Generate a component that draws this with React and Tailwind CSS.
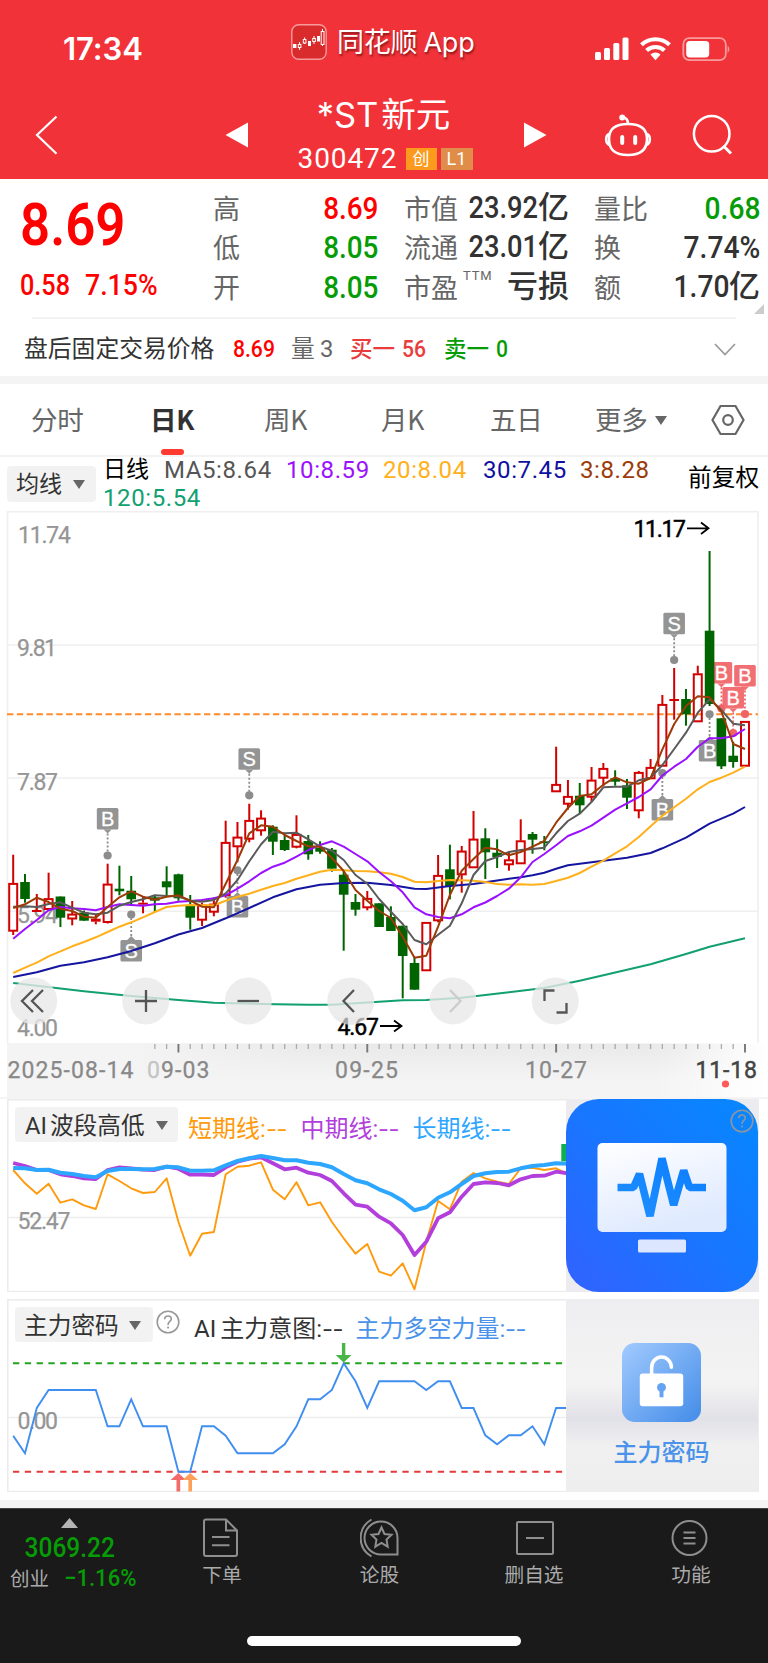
import React from 'react';
import clsx from 'clsx';

// x position of the n-th trading day
const dayX = (i) => 13.2 + i * 11.803;

const toPoints = (ys) => ys.map((y, i) => `${dayX(i).toFixed(1)},${y}`).join(' ');
const pairsToPoints = (pairs) => pairs.map(([i, y]) => `${dayX(i).toFixed(1)},${y}`).join(' ');

// [direction, high, bodyTop, bodyBottom, low]
const candles = [
  ['u', 854.7, 883.3, 930.7, 935],
  ['d', 874, 882, 899, 902.7],
  ['u', 894, 910, 912, 912],
  ['u', 872.7, 898.5, 909, 910.7],
  ['d', 896.5, 896.5, 917.7, 927],
  ['u', 901, 914, 918.5, 925.3],
  ['d', 910.5, 912.5, 920.7, 920.7],
  ['u', 914, 918.7, 921.7, 924.3],
  ['u', 863.7, 884, 922, 923.5],
  ['d', 865.7, 888.7, 891.3, 895.3],
  ['d', 876, 890.7, 899.3, 906],
  ['u', 896.7, 902.7, 904.7, 913.3],
  ['d', 895, 897.3, 900.7, 912],
  ['d', 866.3, 881.3, 887.3, 895.7],
  ['d', 873.7, 874.3, 898.3, 900.7],
  ['d', 895, 905.3, 917.7, 929.7],
  ['u', 903, 905, 919.7, 926],
  ['u', 897.3, 904, 911.7, 916.3],
  ['u', 820.7, 842.3, 895, 897.7],
  ['u', 822, 837, 846.3, 862.3],
  ['u', 803.7, 820.3, 838.7, 842.3],
  ['u', 810.3, 818, 830.3, 835.7],
  ['d', 825.3, 826.7, 841.7, 855],
  ['d', 835, 840, 850, 851],
  ['u', 815.3, 834.3, 846.7, 848.3],
  ['d', 835, 841, 854.3, 859.7],
  ['d', 841.3, 847.7, 851.7, 853.7],
  ['d', 848, 849.7, 868.7, 871.7],
  ['d', 870.7, 874.7, 894.7, 950.7],
  ['d', 894, 902, 909.7, 915.7],
  ['u', 891, 898.3, 907.3, 910.3],
  ['d', 903.3, 903.3, 927, 927],
  ['d', 906.3, 917, 931, 931],
  ['d', 925.7, 925.7, 956, 998.3],
  ['d', 956.7, 963, 989.7, 989.7],
  ['u', 922.3, 922.3, 970.3, 970.3],
  ['u', 855, 875.3, 920.3, 922.3],
  ['d', 844.7, 869.3, 886.3, 899.3],
  ['u', 846, 851, 874.3, 892.7],
  ['u', 811, 839, 867.3, 867.3],
  ['d', 828.3, 838.3, 852.3, 879],
  ['d', 839.3, 852.7, 857, 868],
  ['u', 852.7, 859.7, 864.3, 870.7],
  ['u', 819.3, 840.7, 863.3, 863.3],
  ['d', 832, 834, 839.7, 853.7],
  ['d', 836, 841.3, 843, 850.3],
  ['u', 746.7, 784.3, 791.3, 791.3],
  ['u', 780, 796.3, 803.7, 809.7],
  ['d', 783, 795.7, 805.3, 813.7],
  ['u', 767, 780, 796.7, 801.7],
  ['u', 763, 768.3, 777.7, 786],
  ['d', 770.3, 778.3, 781.7, 785.7],
  ['d', 779, 785.3, 797.7, 809],
  ['u', 771, 772.3, 810.3, 818.3],
  ['u', 759, 767.3, 778.3, 778.3],
  ['u', 695, 704.3, 765.7, 765.7],
  ['u', 668, 699, 701, 719.7],
  ['d', 689, 699, 714.3, 725.7],
  ['u', 665.7, 673.7, 721.3, 721.3],
  ['d', 551, 630.7, 704, 706],
  ['d', 718.3, 718.3, 766.3, 769],
  ['d', 741.7, 755.7, 762, 767.7],
  ['u', 721.3, 721.3, 765.7, 765.7],
];

const ma3 = [
  908, 904.3, 897.7, 902, 908.7, 911, 916.7, 917.7, 907, 897.3, 891.3, 896.7, 899.7, 896.7, 895.3, 900.7,
  906.7, 907.3, 883.7, 860, 833.3, 825.3, 826.7, 835, 841, 846.3, 846.7, 858, 871, 890, 900.7, 911, 918,
  936.7, 957.7, 955.7, 926.7, 895, 870.7, 859, 847.7, 849.3, 855.3, 852, 846.7, 841, 822.7, 808, 796, 794.3,
  784.7, 777.3, 782.3, 783.7, 778, 749.3, 724, 706, 696.3, 697.3, 711.7, 744, 749,
];
const ma5 = [
  906.7, 906.3, 907, 904, 902.3, 907.7, 912.7, 914.3, 912.7, 905.7, 902, 899.3, 895.3, 896, 896.3, 900.7,
  901.7, 900, 893.3, 880, 861.3, 844.3, 831.7, 833.3, 832.7, 839.3, 846.7, 850.7, 860, 875, 883.7, 899,
  911.7, 924, 940, 944.3, 934.7, 925.7, 903.3, 875, 861, 857, 852, 850, 849, 847.7, 833.3, 821, 813.7, 802,
  787.3, 786.7, 786.7, 780.3, 777.7, 765, 749, 732.7, 712.7, 699.3, 710, 723.7, 725.3,
];
const ma10 = [
  938.7, 929, 920, 910.3, 907, 908.3, 909, 910.3, 907, 904.3, 905, 905.7, 904.3, 903.7, 901.7, 901, 900,
  898.3, 895.3, 888.7, 881.3, 873, 866.7, 862.7, 856.7, 850, 845, 841.3, 846.7, 854, 861.3, 872, 881.3,
  892.3, 907.3, 914.3, 917, 918.3, 914.3, 907.3, 902.5, 896, 888.7, 877.3, 862, 854, 845.3, 836, 831.3,
  825.7, 817.7, 809.7, 803.3, 797, 789.3, 775.5, 766.7, 759, 746.7, 738.3, 738.3, 736.3, 729,
];
const ma20 = [
  973, 967.7, 962.7, 956.3, 951.3, 946.3, 942, 937.3, 932, 926.7, 922.3, 917.3, 912, 907, 905.7, 905, 905.3,
  905.3, 900.7, 896.7, 893.7, 889.7, 886, 883, 878.7, 875.3, 871.7, 869.7, 870.3, 871, 871.3, 872.3, 873.7,
  877, 881.7, 882.3, 881, 880, 880.3, 880.7, 882, 884, 884.7, 884.3, 884.7, 884, 881, 877.7, 873, 866.7,
  860.7, 853.3, 846.3, 837, 826.3, 815.7, 807.3, 798.7, 789.3, 782, 777.7, 772.7, 766.7,
];
const ma30 = [
  [0, 977], [2, 972.3], [4, 965.7], [6, 962.3], [8, 957.3], [10, 951], [12, 943.3], [14, 934.5], [16, 928],
  [18, 918.3], [20, 908], [22, 897.3], [24, 889.3], [26, 884.7], [28, 883], [30, 882.7], [32, 885],
  [34, 888.7], [35, 889], [37, 886], [39, 884], [42, 878.7], [43, 877.3], [44, 875.3], [45, 872.7],
  [46, 868.7], [47, 865.3], [50, 860.7], [52, 857.7], [54, 853], [55, 848.3], [57, 837.7], [59, 823.7],
  [61, 813.7], [62, 807],
];
const ma120 = [
  [0, 983], [2, 985.7], [6, 991.3], [10, 996], [14, 1000], [17, 1002.7], [21, 1004], [25, 1004.7],
  [27, 1004.7], [33, 1000.3], [35, 1000], [38, 997.7], [42, 992.3], [45, 988], [48, 980.7], [50, 975.3],
  [54, 964.3], [57, 954], [59, 946.7], [62, 938.3],
];

const shortLine = [
  1170, 1183.3, 1193.7, 1183.7, 1202.7, 1199.3, 1205.3, 1209, 1174.3, 1181, 1188.3, 1193, 1192, 1178.3,
  1221.7, 1255.7, 1233.7, 1232, 1174.3, 1166.7, 1165.7, 1162.3, 1189.7, 1199.3, 1182.3, 1205.3, 1202.3,
  1222, 1238.3, 1253.7, 1244, 1271.7, 1275.7, 1263.3, 1289.3, 1241.7, 1201, 1209.3, 1181.7, 1173, 1178.3,
  1181.7, 1184, 1168.3, 1167.7, 1170, 1168.3, 1174,
];
const midLine = [
  1163, 1166, 1170, 1170, 1174.3, 1176, 1178.3, 1179, 1170, 1167.3, 1168.3, 1169.7, 1170, 1166.7, 1168.7,
  1174.7, 1174.7, 1175, 1167.3, 1161.7, 1158.7, 1157.3, 1163.3, 1169.3, 1167.7, 1172.7, 1175, 1181, 1193.3,
  1204.7, 1206.7, 1216.7, 1223.3, 1235, 1255, 1241.7, 1218.3, 1212.3, 1196.7, 1184, 1182.3, 1183, 1185.3,
  1179.3, 1176, 1175.7, 1171.7, 1173.3,
];
const longLine = [
  1168, 1168.3, 1170, 1169.7, 1172.7, 1174, 1176, 1177.3, 1171, 1169, 1169, 1169.3, 1169, 1166.7, 1167.3,
  1170.7, 1170.7, 1170.3, 1165.3, 1161, 1158.3, 1156, 1158, 1160.3, 1160.3, 1162.7, 1164, 1167.3, 1174,
  1180.3, 1183.3, 1189.3, 1194, 1200.7, 1210.3, 1207.3, 1197.7, 1192.3, 1184, 1176, 1173.3, 1172, 1171.7,
  1168.3, 1166, 1165, 1163.3, 1163.7,
];
const forceLine = [
  1435.7, 1453.3, 1408, 1390, 1390, 1390, 1390, 1390, 1426.3, 1426.3, 1399.3, 1426.3, 1426.3, 1426.3,
  1471.7, 1471.7, 1426.3, 1426.3, 1435.7, 1453.3, 1453.3, 1453.3, 1453.3, 1444.3, 1426.3, 1399.3, 1399.3,
  1390, 1363.3, 1381.3, 1408, 1381.3, 1381.3, 1381.3, 1381.3, 1390, 1381.3, 1381.3, 1408, 1408, 1435.3,
  1444.3, 1435.3, 1435.3, 1426.3, 1444.3, 1408, 1408,
];

// trade markers: box is the top of the label, dot is the anchor point
const markers = [
  { day: 8, text: 'B', box: 808, dot: 855.5, color: '#8c8c8c' },
  { day: 10, text: 'S', box: 940, dot: 914.5, color: '#8c8c8c' },
  { day: 20, text: 'S', box: 748.3, dot: 795.3, color: '#8c8c8c' },
  { day: 19, text: 'B', box: 896, dot: 870.3, color: '#8c8c8c' },
  { day: 56, text: 'S', box: 612.7, dot: 660, color: '#8c8c8c' },
  { day: 55, text: 'B', box: 799, dot: 773, color: '#8c8c8c' },
  { day: 59, text: 'B', box: 740, dot: 714.3, color: '#8c8c8c' },
  { day: 60, text: 'B', box: 662, dot: 708.5, color: '#f06468' },
  { day: 61, text: 'B', box: 687, dot: 733, color: '#f06468' },
  { day: 62, text: 'B', box: 665, dot: 714, color: '#f06468' },
];

const Marker = ({ day, text, box, dot, color }) => {
  const x = dayX(day);
  const above = box < dot;
  const edge = above ? box + 21.5 : box;
  const tip = above ? edge + 4 : edge - 4;
  return (
    <g>
      <line x1={x} y1={tip} x2={x} y2={dot} stroke={color} strokeWidth="1.8" strokeDasharray="2 2" />
      <circle cx={x} cy={dot} r="4.1" fill={color} />
      <rect x={x - 10.8} y={box} width="21.6" height="21.5" rx="1.5" fill={color} opacity="0.93" />
      <path d={`M${x - 4} ${edge}L${x} ${tip}L${x + 4} ${edge}Z`} fill={color} opacity="0.93" />
      <text x={x} y={box + 17.8} textAnchor="middle" fontSize="20" fill="#fff" stroke="#fff" strokeWidth="0.3" className="font-['Liberation_Sans',sans-serif]">
        {text}
      </text>
    </g>
  );
};

const Candle = ({ day, data }) => {
  const [dir, high, top, bottom, low] = data;
  const x = dayX(day);
  if (dir === 'd') {
    return (
      <g fill="#006400">
        <rect x={x - 1} y={high} width="2" height={low - high} />
        <rect x={x - 4.8} y={top} width="9.6" height={Math.max(bottom - top, 1.8)} />
      </g>
    );
  }
  return (
    <g stroke="#d20000" strokeWidth="2" fill="none">
      {high < top && <line x1={x} y1={high} x2={x} y2={top} />}
      {low > bottom && <line x1={x} y1={bottom} x2={x} y2={low} />}
      {bottom - top < 3.5 ? (
        <line x1={x - 4.8} y1={(top + bottom) / 2} x2={x + 4.8} y2={(top + bottom) / 2} strokeWidth={bottom - top} />
      ) : (
        <rect x={x - 4} y={top + 0.6} width="8" height={bottom - top - 0.6} />
      )}
    </g>
  );
};

const AxisText = ({ x, y, w, children, fill = '#959595', bold = 0.25 }) => (
  <text x={x} y={y} textLength={w} lengthAdjust="spacing" fontSize="23" fill={fill} stroke={fill} strokeWidth={bold} className="font-['Roboto',sans-serif]">
    {children}
  </text>
);

const toolButtons = [
  { cx: 33.7, icon: 'M33 -11L22 0L33 11M43 -11L32 0L43 11', color: '#555' },
  { cx: 145.7, icon: 'M135 0H157M146 -11V11', color: '#555' },
  { cx: 248.3, icon: 'M237.5 0H259', color: '#555' },
  { cx: 350.7, icon: 'M354 -11L343.5 0L354 11', color: '#555' },
  { cx: 453, icon: 'M450 -11L460.5 0L450 11', color: '#ccc' },
  { cx: 555.3, icon: 'M544.5 0V-10.5H554.5M566.5 2V11.5H556.5', color: '#555' },
];

const KLineChart = () => (
  <svg viewBox="0 509 768 588" className="block w-[768px] h-[588px] shrink-0">
    <defs>
      <linearGradient id="band" x1="0" x2="0" y1="0" y2="1">
        <stop offset="0" stopColor="#e9e9e9" />
        <stop offset="0.7" stopColor="#f4f4f4" />
      </linearGradient>
      <linearGradient id="bandFade" x1="0" x2="1" y1="0" y2="0">
        <stop offset="0" stopColor="#f4f4f4" />
        <stop offset="0.15" stopColor="#f4f4f4" />
        <stop offset="0.4" stopColor="#f4f4f4" stopOpacity="0" />
        <stop offset="0.85" stopColor="#fff" stopOpacity="0" />
        <stop offset="1" stopColor="#fff" />
      </linearGradient>
    </defs>
    <g stroke="#efefef" strokeWidth="1.6" fill="none">
      <path d="M7.5 1043V511.7H758V1043" />
      <path d="M7 645H758M7 778H758M7 911.3H758" />
    </g>
    <rect x="7" y="1043.5" width="761" height="53.5" fill="url(#band)" />
    <rect x="7" y="1043" width="761" height="54" fill="url(#bandFade)" />

    <AxisText x="18" y="542.5" w="53">11.74</AxisText>
    <AxisText x="17" y="656.3" w="40">9.81</AxisText>
    <AxisText x="17" y="789.7" w="41">7.87</AxisText>
    <AxisText x="17" y="923" w="41">5.94</AxisText>
    <AxisText x="17" y="1036.3" w="41">4.00</AxisText>

    <path d="M7 714.2H758" stroke="#ff8c2e" strokeWidth="2.1" strokeDasharray="6.4 3.45" />

    {markers.map((m) => <Marker key={`${m.day}${m.text}`} {...m} />)}
    {candles.map((c, i) => <Candle key={i} day={i} data={c} />)}

    <g fill="none" strokeWidth="2" strokeLinejoin="round">
      <polyline points={pairsToPoints(ma120)} stroke="#12a070" />
      <polyline points={pairsToPoints(ma30)} stroke="#1515a0" />
      <polyline points={toPoints(ma20)} stroke="#ffb01a" />
      <polyline points={toPoints(ma10)} stroke="#9a10ff" />
      <polyline points={toPoints(ma5)} stroke="#5a5a5a" />
      <polyline points={toPoints(ma3)} stroke="#9c3a08" />
    </g>

    <AxisText x="633.5" y="537" w="52.5" fill="#000" bold="0.5">11.17</AxisText>
    <path d="M687 528.3H708M701 522.5L708.5 528.3L701 534" fill="none" stroke="#000" strokeWidth="1.8" />

    {toolButtons.map((b) => (
      <g key={b.cx}>
        <circle cx={b.cx} cy="1001" r="23.5" fill="#e8e8e8" opacity="0.8" />
        <path d={b.icon} transform="translate(0 1001)" fill="none" stroke={b.color} strokeWidth="2.3" />
      </g>
    ))}
    <AxisText x="337.5" y="1035.3" w="41.5" fill="#000" bold="0.5">4.67</AxisText>
    <path d="M380 1026H401M394 1020.5L401.5 1026L394 1031.5" fill="none" stroke="#000" strokeWidth="1.8" />
    <path d="M333 1017H368.2A23.5 23.5 0 0 1 333 1017Z" fill="#e8e8e8" opacity="0.7" />

    {candles.map((_, i) => {
      if (i < 12) return null;
      const major = i % 16 === 14;
      return (
        <line key={i} x1={dayX(i)} x2={dayX(i)} y1="1044" y2={major ? 1052.5 : 1049} stroke={major ? '#777' : '#aaa'} strokeWidth={major ? 1.9 : 1.3} />
      );
    })}
    <AxisText x="7.5" y="1078.3" w="126" fill="#888">2025-08-14</AxisText>
    <AxisText x="147" y="1078.3" w="62.5" fill="#888"><tspan fill="#c4c4c4" stroke="#c4c4c4">0</tspan>9-03</AxisText>
    <AxisText x="335" y="1078.3" w="63" fill="#888">09-25</AxisText>
    <AxisText x="525" y="1078.3" w="62" fill="#888">10-27</AxisText>
    <AxisText x="695.5" y="1078.3" w="61.5" fill="#444" bold="0.5">11-18</AxisText>
    <circle cx="725.5" cy="1084" r="3.6" fill="#ff5a5a" />
  </svg>
);

const Down = ({ className }) => (
  <svg viewBox="0 0 12 9" className={clsx('h-[9px] w-3 shrink-0', className)}>
    <path d="M0 0H12L6 9Z" fill="#666" />
  </svg>
);

const HelpMark = ({ color }) => (
  <svg viewBox="0 0 24 24" className="h-6 w-6 shrink-0" fill="none" stroke={color} strokeWidth="1.6">
    <circle cx="12" cy="12" r="10.8" />
    <path d="M8.7 9.3C8.7 7.3 10.1 6 12 6s3.3 1.2 3.3 3c0 2.3-3.2 2.5-3.2 5.2v.8" />
    <path d="M12.1 16.6V18.4" strokeWidth="1.9" />
  </svg>
);

const StatusBar = () => (
  <div className="flex h-[84px] w-full shrink-0 text-white">
    <div className="ml-[63px] mt-[33px] w-[228px] font-['Inter',sans-serif] text-[31px] leading-8 font-semibold tracking-[-0.1px]">17:34</div>
    <svg viewBox="0 0 36 36" className="mt-6 h-9 w-9 shrink-0">
      <rect x="0.8" y="0.8" width="34.4" height="34.4" rx="7" fill="#d92a2c" stroke="#f79a9c" strokeWidth="1.4" />
      <g fill="#fff">
        <rect x="2" y="20" width="3.4" height="4" />
        <rect x="17" y="17" width="3" height="5" />
        <rect x="26" y="12" width="3" height="5.5" />
      </g>
      <g fill="none" stroke="#fff">
        <path d="M8.6 18V26M13.6 13.5V20M23 12V20M31.5 5V22" />
        <rect x="7.3" y="20.5" width="2.6" height="3" fill="#d92a2c" />
        <rect x="12.3" y="15.5" width="2.6" height="3.5" fill="#d92a2c" />
        <rect x="21.7" y="14.5" width="2.6" height="3" fill="#d92a2c" />
        <rect x="30.2" y="7.5" width="2.8" height="13" fill="#d92a2c" />
      </g>
    </svg>
    <div className="ml-[10px] mt-[27px] w-[257px] text-[27px] leading-8 font-['Inter','Noto_Sans_CJK_SC',sans-serif] tracking-[-0.2px] [text-shadow:1px_2px_2px_rgba(60,0,0,0.55)]">
      同花顺<span className="ml-1.5">App</span>
    </div>
    <svg viewBox="0 0 136 26" className="mt-[36px] h-[26px] w-[136px] shrink-0">
      <g fill="#fff">
        <rect x="1" y="16" width="6" height="8" rx="1.5" />
        <rect x="10" y="12" width="6" height="12" rx="1.5" />
        <rect x="19.3" y="7" width="6" height="17" rx="1.5" />
        <rect x="28.5" y="1.5" width="6" height="22.5" rx="1.5" />
      </g>
      <g fill="none" stroke="#fff" strokeWidth="4.2">
        <path d="M47.5 8.8A20.5 20.5 0 0 1 75.5 8.8" />
        <path d="M52.6 14.5A13 13 0 0 1 70.4 14.5" />
      </g>
      <path d="M56.4 18.6A7.5 7.5 0 0 1 66.6 18.6L61.5 24.3Z" fill="#fff" />
      <rect x="89.3" y="2.2" width="42.5" height="22" rx="6" fill="none" stroke="#f79a9c" strokeWidth="1.8" />
      <rect x="92.2" y="5" width="23" height="16.4" rx="3.6" fill="#fff" />
      <path d="M133.6 9.5A5 5 0 0 1 133.6 17Z" fill="#f79a9c" />
    </svg>
  </div>
);

const TitleBar = () => (
  <div className="flex h-[95px] w-full shrink-0 text-white">
    <svg viewBox="0 0 24 40" className="ml-[34px] mt-[31px] h-10 w-6" fill="none" stroke="#fff" strokeWidth="2.2">
      <path d="M22.5 1.5L3 20L22.5 38.8" />
    </svg>
    <svg viewBox="0 0 24 26" className="ml-[167px] mt-[38px] h-[26px] w-6">
      <path d="M23 0.5V25.5L0.5 13Z" fill="#fff" />
    </svg>
    <div className="flex w-[274px] flex-col items-center">
      <div className="mr-[5px] mt-[11px] text-[34.5px] leading-10 font-['Inter','Noto_Sans_CJK_SC',sans-serif]">
        <span>*ST</span>
        <span className="ml-[3px]">新元</span>
      </div>
      <div className="mr-0.5 mt-[11px] flex items-center">
        <span className="w-[101px] text-[28px] leading-[26px] tracking-[0.9px]">300472</span>
        <span className="ml-[7px] flex h-[22px] w-[31px] items-center justify-center bg-[#fb9a1c] text-[17px] leading-none">创</span>
        <span className="ml-1 flex h-[22px] w-8 items-center justify-center bg-[#e18d4a] text-lg leading-none">L1</span>
      </div>
    </div>
    <svg viewBox="0 0 24 26" className="mt-[38px] h-[26px] w-6">
      <path d="M1 0.5V25.5L23.5 13Z" fill="#fff" />
    </svg>
    <svg viewBox="0 0 48 44" className="ml-[57px] mt-[29px] h-11 w-12" fill="none" stroke="#fff" strokeWidth="2.6">
      <path d="M24 11C38 11 43 17 43 26C43 36 38 42 24 42S5 36 5 26C5 17 10 11 24 11Z" />
      <path d="M5.5 21C1 22 1 31 6 32M42.5 21C47 22 47 31 42 32M24 11C24 7 22.5 4.5 18.5 4.5" />
      <circle cx="18.2" cy="4.4" r="1.7" fill="#fff" />
      <path d="M18.2 24V30M31.2 24V30" strokeWidth="4" strokeLinecap="round" />
    </svg>
    <svg viewBox="0 0 42 42" className="ml-10 mt-[30px] h-[42px] w-[42px]" fill="none" stroke="#fff" strokeWidth="2.5">
      <circle cx="19.7" cy="19.7" r="17.8" />
      <path d="M31.5 32L39 39.5" strokeWidth="3" />
    </svg>
  </div>
);

const Digits = ({ children, className }) => (
  <span className={clsx('inline-block font-medium', className)}>{children}</span>
);

const quoteRows = [
  { a: ['高', '8.69', 'text-[#fe0000]'], b: ['市值', '23.92', '亿'], c: ['量比', '0.68', '', 'text-[#069c06]'] },
  { a: ['低', '8.05', 'text-[#069c06]'], b: ['流通', '23.01', '亿'], c: ['换', '7.74%', '', 'text-[#323232]'] },
  { a: ['开', '8.05', 'text-[#069c06]'], b: ['市盈', '', '亏损'], c: ['额', '1.70', '亿', 'text-[#323232]'] },
];

const QuoteBoard = () => (
  <div className="flex h-[138px] w-full shrink-0">
    <div className="w-[213px] pl-5 text-[#fe0000]">
      <span className="mt-[15px] inline-block origin-left scale-x-[0.88] text-[60px] leading-[62px] font-semibold">8.69</span>
      <div className="mt-[13px] flex text-[29px] leading-8">
        <Digits className="w-[65px] origin-left scale-x-[0.87]">0.58</Digits>
        <Digits className="origin-left scale-x-[0.92]">7.15%</Digits>
      </div>
    </div>
    <div className="w-[555px] pt-3">
      {quoteRows.map(({ a, b, c }) => (
        <div key={a[0]} className="flex h-[39.3px] items-center text-[27px] leading-[39px] text-[#666]">
          <span className="w-[66px]">{a[0]}</span>
          <span className="-mt-1 flex w-[99px] justify-end">
            <Digits className={clsx('origin-right scale-x-[0.9] text-[31px]', a[2])}>{a[1]}</Digits>
          </span>
          <span className="ml-[26px] flex w-[165px] justify-between">
            <span className="flex">
              {b[0]}
              {!b[1] && <span className="-mt-3.5 ml-[5px] text-[13px] leading-[39px] tracking-[0.8px]">TTM</span>}
            </span>
            <span className="-mt-[3px] flex items-baseline text-[31px] text-[#323232]">
              <Digits className="origin-right scale-x-[0.88]">{b[1]}</Digits>
              <span className="font-medium">{b[2]}</span>
            </span>
          </span>
          <span className="ml-[25px] flex w-[166px] justify-between">
            <span>{c[0]}</span>
            <span className={clsx('flex items-baseline text-[31px]', c[3], c[2] ? '-mt-[3px]' : '-mt-0.5')}>
              <Digits className="origin-right scale-x-[0.91]">{c[1]}</Digits>
              {c[2] && <span className="font-medium">{c[2]}</span>}
            </span>
          </span>
        </div>
      ))}
      <svg viewBox="0 0 10 10" className="ml-auto mr-1 -mt-[5px] h-2.5 w-2.5">
        <path d="M10 0V10H0Z" fill="#ccc" />
      </svg>
    </div>
  </div>
);

const AfterHours = () => (
  <div className="mx-8 h-[59px] shrink-0 border-t-2 border-[#f2f2f2]">
    <div className="-ml-2 flex h-[59px] items-center pt-1 pb-[3px] text-[23.8px] leading-8 text-[#333]">
      <span className="w-[209px]">盘后固定交易价格</span>
      <Digits className="w-[58px] origin-left scale-x-[0.88] text-2xl text-[#fe0000]">8.69</Digits>
      <span className="w-[29px] text-[#666]">量</span>
      <span className="w-[30px] text-[#666]">3</span>
      <span className="w-[52px] text-[22.5px] font-medium text-[#e93c3c]">买一</span>
      <Digits className="w-[42px] origin-left scale-x-[0.88] text-2xl text-[#e93c3c]">56</Digits>
      <span className="w-[52px] text-[22.5px] font-medium text-[#069c06]">卖一</span>
      <Digits className="origin-left scale-x-[0.88] text-2xl text-[#069c06]">0</Digits>
      <svg viewBox="0 0 22 13" className="ml-auto h-[13px] w-[22px]" fill="none" stroke="#999" strokeWidth="1.7">
        <path d="M1 1L11 11.5L21 1" />
      </svg>
    </div>
  </div>
);

const tabs = [
  { label: '分时', width: 'w-[119px]' },
  { label: '日K', width: 'w-[114px]', active: true },
  { label: '周K', width: 'w-[117px]' },
  { label: '月K', width: 'w-[109px]' },
  { label: '五日', width: 'w-[105px]' },
  { label: '更多', width: 'w-[60px]' },
];

const PeriodTabs = () => (
  <div className="flex h-[73px] w-full shrink-0 border-b-2 border-[#f3f3f3] pl-[31px] text-[26.5px] leading-[69px] text-[#666] font-['Noto_Sans_CJK_SC',sans-serif]">
    {tabs.map((t) => (
      <div key={t.label} className={clsx('flex flex-col items-start', t.width)}>
        <span className={clsx('h-[65px] tracking-[-0.2px]', t.active && 'font-bold text-[#323232]')}>{t.label}</span>
        {t.active && <span className="ml-[11px] h-1.5 w-[23px] rounded-[3px] bg-[#ff3a30]" />}
      </div>
    ))}
    <Down className="mt-8" />
    <svg viewBox="0 0 34 32" className="ml-[44px] mt-[20px] h-8 w-[34px]" fill="none" stroke="#666" strokeWidth="2.2">
      <path d="M9.5 2H24.5L32.5 16L24.5 30H9.5L1.5 16Z" />
      <circle cx="17" cy="16" r="4.8" />
    </svg>
  </div>
);

const MaLegend = () => (
  <div className="flex h-[52px] w-full shrink-0 text-[24px] leading-[26px]">
    <div className="ml-[7px] mt-[9px] flex h-[36px] w-[89px] items-center rounded bg-[#f2f2f2] pl-[9px] pt-px text-[23px] text-[#333]">
      均线<Down className="ml-[11px]" />
    </div>
    <div className="ml-[7px] w-[571px] tracking-[0.6px]">
      <div className="flex">
        <span className="w-[61px] text-[23px] tracking-normal">日线</span>
        <span className="w-[122px] text-[#555]">MA5:8.64</span>
        <span className="w-[97px] text-[#9a10ff]">10:8.59</span>
        <span className="w-[100px] text-[#ffb01a]">20:8.04</span>
        <span className="w-[97px] text-[#1010a0]">30:7.45</span>
        <span className="text-[#9c3a08]">3:8.28</span>
      </div>
      <div className="mt-0.5 text-[#12a070]">120:5.54</div>
    </div>
    <div className="ml-[14px] mt-2 text-[23.7px]">前复权</div>
  </div>
);

const Pill = ({ children, className }) => (
  <div className={clsx('flex h-[35px] items-center rounded bg-[#f2f2f2] pt-0.5 text-[23.7px] leading-8 text-[#333]', className)}>
    {children}
  </div>
);

const Dashes = () => <span className="ml-px inline-block origin-left scale-x-[1.35] tracking-[1.1px]">--</span>;

const BandPanel = () => (
  <div className="mx-[7px] grid h-[193px] w-[752px] shrink-0">
    <svg viewBox="7 1099 752 193" className="col-start-1 row-start-1 h-[193px] w-[752px]">
      <rect x="7.8" y="1099.8" width="750.4" height="191.7" fill="none" stroke="#ececec" strokeWidth="1.5" />
      <path d="M8 1217.5H566" stroke="#ededed" strokeWidth="1.4" />
      <AxisText x="17.5" y="1228.5" w="53">52.47</AxisText>
      <g fill="none" strokeLinejoin="round">
        <polyline points={toPoints(shortLine)} stroke="#ff9a0c" strokeWidth="1.9" />
        <polyline points={toPoints(midLine)} stroke="#b23fdc" strokeWidth="3.8" />
        <polyline points={toPoints(longLine)} stroke="#2da6ff" strokeWidth="4" />
      </g>
      <rect x="561.3" y="1144" width="5" height="17.3" fill="#0cb04c" />
    </svg>
    <div className="col-start-1 row-start-1 flex items-start">
      <Pill className="ml-2 mt-2 w-[163px] pl-[10px]">
        AI<span className="ml-[3px]">波段高低</span><Down className="ml-[11px]" />
      </Pill>
      <span className="ml-[10px] mt-[14px] w-[112.5px] text-2xl leading-8 text-[#ff9a0c]">短期线:<Dashes /></span>
      <span className="mt-[14px] w-[112px] text-2xl leading-8 text-[#b23fdc]">中期线:<Dashes /></span>
      <span className="mt-[14px] w-[153.5px] text-2xl leading-8 text-[#2da6ff]">长期线:<Dashes /></span>
      <div className="grid h-[193px] w-[192px] bg-[#ececf0]">
        <svg viewBox="566 1099 192 193" className="col-start-1 row-start-1 h-[193px] w-[192px]">
          <defs>
            <linearGradient id="aiTile" x1="1" y1="0" x2="0" y2="1">
              <stop offset="0" stopColor="#0688ff" />
              <stop offset="0.5" stopColor="#1876ff" />
              <stop offset="1" stopColor="#3261ff" />
            </linearGradient>
            <linearGradient id="aiScreen" x1="0" y1="0" x2="0.4" y2="1">
              <stop offset="0" stopColor="#fff" />
              <stop offset="1" stopColor="#dfeaff" />
            </linearGradient>
            <linearGradient id="pulse" x1="1" y1="0" x2="0" y2="1">
              <stop offset="0" stopColor="#0a7dff" />
              <stop offset="1" stopColor="#2090ff" />
            </linearGradient>
          </defs>
          <rect x="566" y="1099" width="192" height="193" rx="33" fill="url(#aiTile)" />
          <rect x="597.5" y="1143" width="129" height="89" rx="5" fill="url(#aiScreen)" />
          <path d="M617.5 1187.5H633.5L639.5 1174L650 1216L662 1158.5L673.7 1205L683.7 1170.5L689.5 1187.5H706" fill="none" stroke="url(#pulse)" strokeWidth="7.6" strokeLinejoin="bevel" />
          <rect x="638" y="1239.5" width="48" height="13" rx="1.5" fill="#dce6ff" />
        </svg>
        <div className="col-start-1 row-start-1 ml-auto mr-1 mt-2.5">
          <HelpMark color="#8f959f" />
        </div>
      </div>
    </div>
  </div>
);

const ForcePanel = () => (
  <div className="mx-[7px] mt-[7px] grid h-[193px] w-[752px] shrink-0">
    <svg viewBox="7 1299 752 193" className="col-start-1 row-start-1 h-[193px] w-[752px]">
      <rect x="7.8" y="1299.8" width="750.4" height="191.7" fill="none" stroke="#ececec" strokeWidth="1.5" />
      <path d="M8 1417.5H566" stroke="#ededed" strokeWidth="1.4" />
      <AxisText x="17.5" y="1428.5" w="40.5">0.00</AxisText>
      <path d="M13 1363.2H566" stroke="#1fa51f" strokeWidth="2.1" strokeDasharray="6.3 5.5" />
      <path d="M13 1471.8H566" stroke="#e43a3a" strokeWidth="2.1" strokeDasharray="6.3 5.5" />
      <polyline points={toPoints(forceLine)} fill="none" stroke="#3f8ef0" strokeWidth="1.9" />
      <path d="M341.9 1343H345.3V1355H351.5L343.6 1362.5L335.7 1355H341.9Z" fill="#48b548" />
      <path d="M176.5 1491.5H180.2V1480H186L178.3 1473L170.5 1480H176.5Z" fill="#f26a6a" />
      <path d="M188.4 1491.5H192V1480H198L190.2 1473L182.5 1480H188.4Z" fill="#ffa05a" />
    </svg>
    <div className="col-start-1 row-start-1 flex items-start">
      <Pill className="ml-2 mt-2 w-[138px] pl-[9px]">
        主力密码<Down className="ml-[10px]" />
      </Pill>
      <div className="ml-[3px] mt-[11px]"><HelpMark color="#999" /></div>
      <span className="ml-[14px] mt-[14px] w-[161.5px] text-2xl leading-8 text-[#333]">AI<span className="ml-1">主力意图:</span><Dashes /></span>
      <span className="mt-[14px] w-[210px] text-2xl leading-8 text-[#4a92ea]">主力多空力量:<Dashes /></span>
      <div className="flex h-[193px] w-[192px] flex-col items-center bg-linear-to-b from-[#eeeef1] from-0% via-[#f3f3f3] via-40% to-[#eeeeef] to-100%">
        <div className="flex h-[193px] w-[192px] flex-col items-center bg-[linear-gradient(to_bottom,transparent_45%,rgba(205,205,220,0.45)_62%,transparent_76%)] pt-11">
          <svg viewBox="0 0 80 80" className="h-[79px] w-[79px]">
            <defs>
              <linearGradient id="lockTile" x1="0" y1="0" x2="1" y2="1">
                <stop offset="0" stopColor="#a2cafe" />
                <stop offset="1" stopColor="#438ce8" />
              </linearGradient>
            </defs>
            <rect width="80" height="80" rx="13" fill="url(#lockTile)" />
            <rect x="18" y="31" width="44" height="33" rx="3" fill="#fff" />
            <path d="M30 32V25A10 10.5 0 0 1 50 24.5" fill="none" stroke="#fff" strokeWidth="3.6" strokeLinecap="round" />
            <circle cx="40" cy="45" r="4.5" fill="#64a3f2" />
            <rect x="38" y="47" width="4" height="8" fill="#64a3f2" />
          </svg>
          <span className="mt-[15px] text-2xl leading-8 font-medium text-[#4a92ea]">主力密码</span>
        </div>
      </div>
    </div>
  </div>
);

const navItems = [
  {
    label: '下单',
    width: 'w-[154px]',
    icon: (
      <>
        <path d="M4 1.5H24L35 12.5V36Q35 38 33 38H4Q2 38 2 36V3.5Q2 1.5 4 1.5M24 1.5V12.5H35" />
        <path d="M10 19H27.5M10 27.3H27.5" />
      </>
    ),
  },
  {
    label: '论股',
    width: 'w-[161px]',
    icon: (
      <>
        <path d="M37.5 36.5H21.5A16.5 16.5 0 1 1 37.5 20Z" />
        <path d="M11.5 1.5C-3 10 -3 30 11.5 38.5" />
        <path d="M21.5 9.5L24.5 16L31.5 16.8L26.5 21.5L27.7 28.7L21.5 25L15.3 28.7L16.5 21.5L11.5 16.8L18.5 16Z" />
      </>
    ),
  },
  {
    label: '删自选',
    width: 'w-[148px]',
    icon: (
      <>
        <rect x="3" y="4" width="36" height="32" rx="1" />
        <path d="M12 20H30" />
      </>
    ),
  },
  {
    label: '功能',
    width: 'w-[166px]',
    icon: (
      <>
        <circle cx="18.5" cy="20" r="17" />
        <path d="M12.5 14.5H24.5M12.5 20H24.5M12.5 25.5H24.5" />
      </>
    ),
  },
];

const BottomBar = () => (
  <div className="flex h-[155px] w-full shrink-0 flex-col items-center border-t border-[#444] bg-[#1a1a1a]">
    <div className="flex h-[127px] w-full">
      <div className="flex w-[145px] shrink-0 flex-col items-center pr-[6px] pt-[9px]">
        <svg viewBox="0 0 17 10" className="h-2.5 w-[17px]">
          <path d="M8.5 0L17 10H0Z" fill="#b4b4b4" />
        </svg>
        <Digits className="mt-[4px] scale-x-[0.89] text-[27.5px] leading-[32px] text-[#069c06]">3069.22</Digits>
        <div className="mt-0.5 flex w-full items-center pl-[10px] text-[19.5px] leading-7 text-[#aaa]">
          <span className="w-[54px]">创业</span>
          <Digits className="-mt-0.5 origin-left scale-x-[0.96] text-[23px] whitespace-nowrap text-[#069c06]">−1.16%</Digits>
        </div>
      </div>
      {navItems.map((item) => (
        <div key={item.label} className={clsx('flex shrink-0 flex-col items-center pt-[9px]', item.width)}>
          <svg viewBox="0 0 40 40" className="h-10 w-10" fill="none" stroke="#8e8e8e" strokeWidth="2">
            {item.icon}
          </svg>
          <span className="mt-1 text-[19.7px] leading-7 text-[#aaa]">{item.label}</span>
        </div>
      ))}
    </div>
    <div className="h-2.5 w-[274px] rounded-full bg-white" />
  </div>
);

const App = () => {
  return (
    <div className="flex h-[1663px] w-[768px] flex-col overflow-hidden bg-white text-black font-['Roboto','Noto_Sans_CJK_SC',sans-serif]">
      <header className="flex shrink-0 flex-col bg-[#f13238]">
        <StatusBar />
        <TitleBar />
      </header>
      <QuoteBoard />
      <AfterHours />
      <div className="h-2 w-full shrink-0 bg-[#f4f4f4]" />
      <PeriodTabs />
      <MaLegend />
      <KLineChart />
      <div className="h-0.5 shrink-0 bg-[#f4f4f4]" />
      <BandPanel />
      <ForcePanel />
      <div className="mt-2 h-2 w-full shrink-0 bg-[#f4f4f4]" />
      <BottomBar />
    </div>
  );
};

export default App;
